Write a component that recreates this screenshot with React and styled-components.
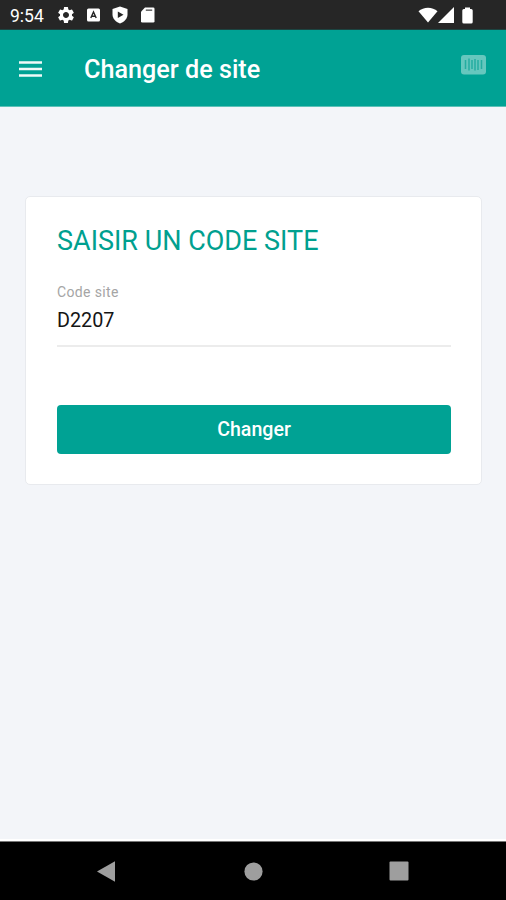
import React from "react";
import styled, { createGlobalStyle } from "styled-components";
import { MdSettings } from "react-icons/md";

const GlobalStyle = createGlobalStyle`
  * {
    box-sizing: border-box;
  }
  body {
    margin: 0;
    font-family: Roboto, sans-serif;
  }
`;
const Screen = styled.div`
  display: flex;
  flex-direction: column;
  width: 506px;
  height: 900px;
  overflow: hidden;
  background-color: #f3f5f9;
`;
const StatusBar = styled.div`
  display: flex;
  align-items: center;
  justify-content: space-between;
  height: 30px;
  flex: none;
  padding: 1px 33px 0 10px;
  color: #fff;
  background-color: #262626;
  border-bottom: 1px solid #1c4441;
`;
const StatusGroup = styled.div`
  display: flex;
  align-items: center;
`;
const Clock = styled.span`
  width: 46px;
  padding-top: 2px;
  font-size: 17.5px;
  line-height: 28px;
  white-space: nowrap;
`;
const Icon = styled.svg`
  display: block;
  flex: none;
  margin-left: ${({ $gap }) => $gap || 0}px;
`;
const AppBar = styled.header`
  display: flex;
  align-items: center;
  height: 77px;
  flex: none;
  padding: 1px 20px 0 19px;
  background-color: #00a294;
  border-bottom: 1px solid #5cc1b8;
`;
const IconButton = styled.button`
  display: flex;
  padding: 0;
  border: 0;
  background: none;
  cursor: pointer;
`;
const ScanButton = styled(IconButton)`
  margin: 0 0 8px auto;
`;
const PageTitle = styled.h1`
  margin: 2px 0 0 42px;
  color: #fff;
  font-size: 25.2px;
  font-weight: 500;
  line-height: 32px;
`;
const Content = styled.main`
  flex: 1;
  padding: 89px 24px 0 25px;
  border-bottom: 2px solid #fff;
`;
const Card = styled.form`
  display: flex;
  flex-direction: column;
  height: 289px;
  padding: 28px 30px 30px 31px;
  border: 1px solid #e8eaee;
  border-radius: 5px;
  background-color: #fff;
`;
const CardTitle = styled.h2`
  margin: 0;
  color: #00a08f;
  font-size: 27px;
  font-weight: 400;
  line-height: 32px;
  white-space: nowrap;
`;
const Field = styled.label`
  display: flex;
  flex-direction: column;
  height: 63px;
  margin-top: 27px;
  border-bottom: 2px solid #ececec;
`;
const Label = styled.span`
  color: #a5a5a5;
  font-size: 14px;
  line-height: 16px;
  letter-spacing: 0.35px;
`;
const Input = styled.input`
  width: 100%;
  height: 28px;
  margin-top: 6px;
  padding: 0;
  border: 0;
  outline: 0;
  color: #151515;
  background: none;
  font-family: inherit;
  font-size: 19.8px;
`;
const SubmitButton = styled.button`
  height: 49px;
  margin-top: auto;
  padding: 0;
  border: 0;
  border-radius: 4px;
  color: #fff;
  background-color: #00a294;
  font-family: inherit;
  font-size: 19.6px;
  font-weight: 500;
  cursor: pointer;
`;
const NavBar = styled.nav`
  display: flex;
  align-items: center;
  justify-content: space-between;
  height: 59px;
  flex: none;
  padding: 0 97px 0 97px;
  border-top: 1px solid #777;
  background-color: #000;
`;

const App = () => {
  return (
    <>
      <GlobalStyle />
      <Screen>
        <StatusBar>
          <StatusGroup>
            <Clock>9:54</Clock>
            <MdSettings size={20} />
            <Icon $gap={11} width="13" height="14" viewBox="0 0 13 14">
              <rect y="0.5" width="13" height="13" rx="1.5" fill="#fff" />
              <path
                d="M3.8 10 6.5 4l2.7 6M5 8.200h3"
                fill="none"
                stroke="#262626"
                strokeWidth="1.4"
              />
            </Icon>
            <Icon $gap={12} width="16" height="18" viewBox="0 0 16 18">
              <path
                d="M8 0.5 15.5 3v5.5c0 4-3 7.3-7.5 9C3.5 15.8 0.5 12.5 0.5 8.5V3z"
                fill="#fff"
              />
              <path d="M5.8 5.5v6.6L11.5 8.8z" fill="#262626" />
            </Icon>
            <Icon $gap={12} width="15" height="16" viewBox="0 0 15 16">
              <path
                d="M5 0.5h8.2Q14.5 0.5 14.5 1.8v12.4q0 1.3-1.3 1.3H2.3Q1 15.5 1 14.2V4.8z"
                fill="#fff"
              />
              <path d="M5.8 3.2h6.4" stroke="#6c6c6c" strokeWidth="1.6" />
            </Icon>
          </StatusGroup>
          <StatusGroup>
            <Icon width="20" height="16" viewBox="0 0 20 16">
              <path d="M10 15.5 0.5 4.2C5.5-.5 14.5-.5 19.5 4.2z" fill="#fff" />
            </Icon>
            <Icon width="17" height="16" viewBox="0 0 17 16">
              <path d="M16 0v16H0z" fill="#fff" />
            </Icon>
            <Icon $gap={7} width="11" height="17" viewBox="0 0 11 17">
              <path
                d="M3 0.5h5v1.5h1.2Q10.7 2 10.7 3.5v11.5q0 1.5-1.5 1.5H1.8Q.3 16.5 .3 15V3.5Q.3 2 1.8 2H3z"
                fill="#fff"
              />
            </Icon>
          </StatusGroup>
        </StatusBar>

        <AppBar>
          <IconButton type="button" aria-label="Menu">
            <Icon width="23" height="17" viewBox="0 0 23 17">
              <path
                d="M0 2.5h23M0 9h23M0 15.5h23"
                stroke="#eefaf8"
                strokeWidth="2.6"
              />
            </Icon>
          </IconButton>
          <PageTitle>Changer de site</PageTitle>
          <ScanButton type="button" aria-label="Scanner">
            <Icon width="25" height="20" viewBox="0 0 25 20">
              <rect width="25" height="19.5" rx="3" fill="#66c7be" />
              <path
                d="M4.5 5v9M8 3.5v12M11 5v9M14 4v11.5M17 5v10M20.5 5v9"
                stroke="#25ada1"
                strokeWidth="1.5"
              />
            </Icon>
          </ScanButton>
        </AppBar>

        <Content>
          <Card onSubmit={(e) => e.preventDefault()}>
            <CardTitle>SAISIR UN CODE SITE</CardTitle>
            <Field>
              <Label>Code site</Label>
              <Input defaultValue="D2207" />
            </Field>
            <SubmitButton type="submit">Changer</SubmitButton>
          </Card>
        </Content>

        <NavBar>
          <Icon width="19" height="21" viewBox="0 0 19 21">
            <path d="M0 10.5 18 0.3v20.4z" fill="#9e9e9e" />
          </Icon>
          <Icon $gap={2} width="19" height="19" viewBox="0 0 19 19">
            <circle cx="9.5" cy="9.5" r="9.1" fill="#9e9e9e" />
          </Icon>
          <Icon width="20" height="20" viewBox="0 0 20 20">
            <rect x="0.5" y="0.5" width="19" height="19" rx="1" fill="#9e9e9e" />
          </Icon>
        </NavBar>
      </Screen>
    </>
  );
};

export default App;
